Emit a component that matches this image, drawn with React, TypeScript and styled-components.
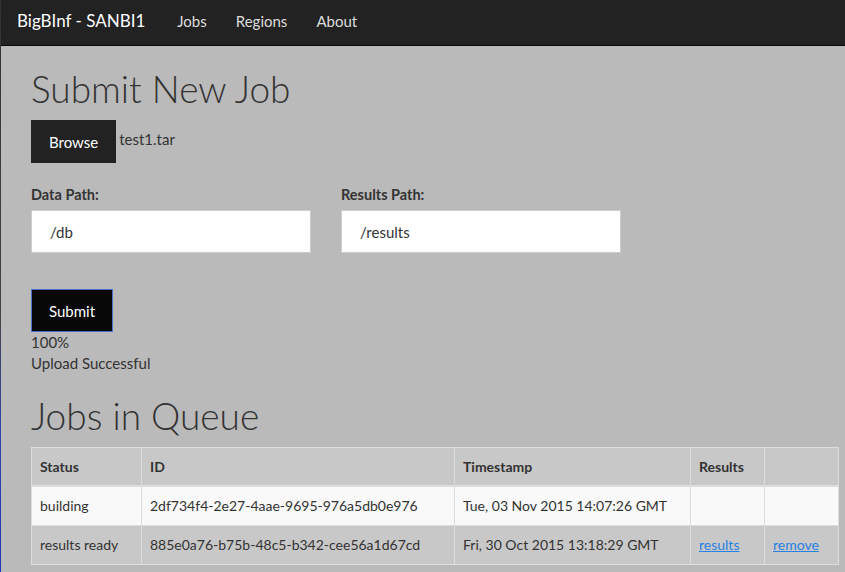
import React from "react";
import styled, { createGlobalStyle } from "styled-components";

const Global = createGlobalStyle`
  html, body { margin: 0; padding: 0; }
  body {
    background: #bababa;
    font-family: Lato, "Open Sans", sans-serif;
    font-size: 15px;
    color: #333;
  }
`;

const Frame = styled.div`
  min-height: 572px;
  border-left: 1px solid;
  border-image: linear-gradient(to bottom, #333 0%, #444 55%, #3344aa 75%, #2233bb 100%) 1;
  box-sizing: border-box;
`;

const NavBar = styled.nav`
  height: 46px;
  box-sizing: border-box;
  padding: 0 0 4px 16px;
  background: #222;
  border-bottom: 1px solid #080808;
  display: flex;
  align-items: center;
`;

const Brand = styled.span`
  color: #fff;
  font-size: 17px;
  margin-right: 32px;
`;

const NavLink = styled.a`
  color: #ddd;
  font-size: 15px;
  margin-right: 29px;
  text-decoration: none;
`;

const Main = styled.main`
  padding: 0 7px 0 30px;
`;

const Title = styled.h1<{ $mt: number; $mb: number }>`
  font-size: 37px;
  font-weight: 300;
  margin: ${(p) => p.$mt}px 0 ${(p) => p.$mb}px;
  line-height: 44px;
  color: #333;
`;

const FileRow = styled.div`
  display: flex;
  align-items: flex-start;
  gap: 3px;
`;

const DarkButton = styled.button<{ $focused?: boolean }>`
  height: 43px;
  padding: 0 17px;
  background: ${(p) => (p.$focused ? "#080808" : "#222")};
  color: #fff;
  border: 1px solid ${(p) => (p.$focused ? "#4a6fc6" : "#222")};
  font-family: inherit;
  font-size: 15px;
`;

const FileName = styled.span`
  padding-top: 10px;
`;

const Fields = styled.div`
  display: flex;
  gap: 30px;
  margin-top: 23px;
`;

const Field = styled.div`
  display: flex;
  flex-direction: column;
`;

const Label = styled.label`
  font-weight: 700;
  font-size: 14.5px;
  margin-bottom: 7px;
`;

const Input = styled.input`
  box-sizing: border-box;
  width: 280px;
  height: 43px;
  border: 1px solid #ccc;
  background: #fff;
  padding: 0 18px;
  font-family: inherit;
  font-size: 15px;
  color: #333;
  outline: none;
`;

const SubmitWrap = styled.div`
  margin-top: 36px;
`;

const Status = styled.div`
  line-height: 21px;
`;

const Table = styled.table`
  width: 808px;
  border-collapse: collapse;
  border: 1px solid #ddd;
  font-size: 14px;
`;

const Row = styled.tr<{ $bg: string }>`
  background: ${(p) => p.$bg};
`;

const Th = styled.th<{ $w?: number }>`
  text-align: left;
  font-weight: 700;
  height: 38px;
  padding: 0 8px;
  border: 1px solid #ddd;
  border-bottom-width: 2px;
  width: ${(p) => (p.$w ? `${p.$w}px` : "auto")};
  box-sizing: border-box;
`;

const Td = styled.td`
  height: 38px;
  padding: 0 8px;
  border: 1px solid #ddd;
`;

const Link = styled.a`
  color: #2780e3;
  text-decoration: underline;
`;

export default function App() {
  return (
    <Frame>
      <Global />
      <NavBar>
        <Brand>BigBInf - SANBI1</Brand>
        <NavLink>Jobs</NavLink>
        <NavLink>Regions</NavLink>
        <NavLink>About</NavLink>
      </NavBar>
      <Main>
        <Title $mt={21} $mb={9}>Submit New Job</Title>
        <FileRow>
          <DarkButton>Browse</DarkButton>
          <FileName>test1.tar</FileName>
        </FileRow>
        <Fields>
          <Field>
            <Label>Data Path:</Label>
            <Input defaultValue="/db" />
          </Field>
          <Field>
            <Label>Results Path:</Label>
            <Input defaultValue="/results" />
          </Field>
        </Fields>
        <SubmitWrap>
          <DarkButton $focused>Submit</DarkButton>
        </SubmitWrap>
        <Status>100%</Status>
        <Status>Upload Successful</Status>
        <Title $mt={20} $mb={9}>Jobs in Queue</Title>
        <Table>
          <thead>
            <Row $bg="#c8c8c8">
              <Th $w={110}>Status</Th>
              <Th $w={313}>ID</Th>
              <Th $w={236}>Timestamp</Th>
              <Th $w={74}>Results</Th>
              <Th />
            </Row>
          </thead>
          <tbody>
            <Row $bg="#f9f9f9">
              <Td>building</Td>
              <Td>2df734f4-2e27-4aae-9695-976a5db0e976</Td>
              <Td>Tue, 03 Nov 2015 14:07:26 GMT</Td>
              <Td />
              <Td />
            </Row>
            <Row $bg="#c8c8c8">
              <Td>results ready</Td>
              <Td>885e0a76-b75b-48c5-b342-cee56a1d67cd</Td>
              <Td>Fri, 30 Oct 2015 13:18:29 GMT</Td>
              <Td>
                <Link href="#">results</Link>
              </Td>
              <Td>
                <Link href="#">remove</Link>
              </Td>
            </Row>
          </tbody>
        </Table>
      </Main>
    </Frame>
  );
}
